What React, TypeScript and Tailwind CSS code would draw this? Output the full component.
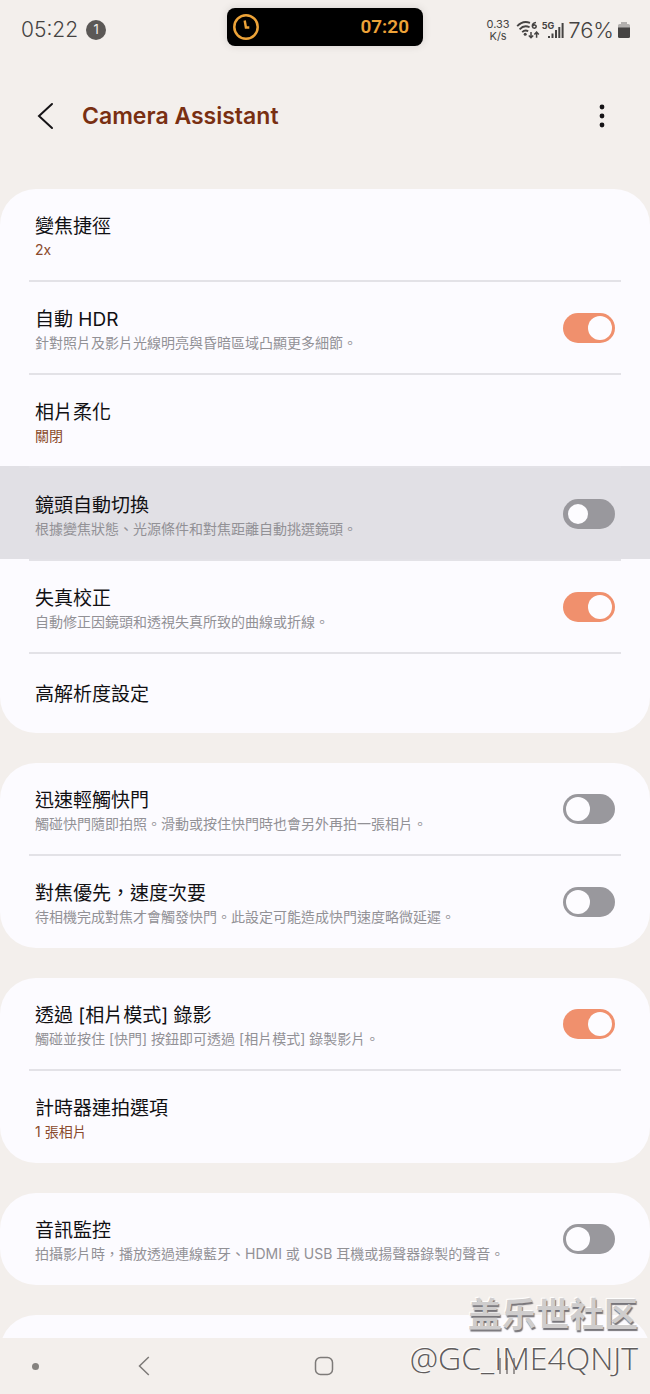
import { useState } from 'react';
import clsx from 'clsx';

interface Setting {
  id: string;
  title: string;
  description?: string;
  value?: string;
  toggle?: boolean;
  pressed?: boolean;
}

const groups: Setting[][] = [
  [
    { id: 'zoom', title: '變焦捷徑', value: '2x' },
    { id: 'hdr', title: '自動 HDR', description: '針對照片及影片光線明亮與昏暗區域凸顯更多細節。', toggle: true },
    { id: 'soften', title: '相片柔化', value: '關閉' },
    { id: 'lens', title: '鏡頭自動切換', description: '根據變焦狀態、光源條件和對焦距離自動挑選鏡頭。', toggle: false, pressed: true },
    { id: 'distortion', title: '失真校正', description: '自動修正因鏡頭和透視失真所致的曲線或折線。', toggle: true },
    { id: 'resolution', title: '高解析度設定' },
  ],
  [
    { id: 'quick-tap', title: '迅速輕觸快門', description: '觸碰快門隨即拍照。滑動或按住快門時也會另外再拍一張相片。', toggle: false },
    { id: 'focus', title: '對焦優先，速度次要', description: '待相機完成對焦才會觸發快門。此設定可能造成快門速度略微延遲。', toggle: false },
  ],
  [
    { id: 'record', title: '透過 [相片模式] 錄影', description: '觸碰並按住 [快門] 按鈕即可透過 [相片模式] 錄製影片。', toggle: true },
    { id: 'timer', title: '計時器連拍選項', value: '1 張相片' },
  ],
  [
    { id: 'audio', title: '音訊監控', description: '拍攝影片時，播放透過連線藍牙、HDMI 或 USB 耳機或揚聲器錄製的聲音。', toggle: false },
  ],
];

function SettingText({ item }: { item: Setting }) {
  const single = !item.description && !item.value;
  return (
    <span className={clsx('flex min-w-0 flex-1 flex-col', single ? 'pt-7 pb-6' : 'pt-[25px] pb-5')}>
      <span className="text-[19px] leading-[26px] text-[#111013]">{item.title}</span>
      {item.description && <span className="text-[14px] leading-5 text-[#929196]">{item.description}</span>}
      {item.value && <span className="text-[14px] leading-5 text-[#8a4a2c]">{item.value}</span>}
    </span>
  );
}

function SettingRow({ item, first }: { item: Setting; first: boolean }) {
  const [on, setOn] = useState(item.toggle ?? false);

  return (
    <li className={clsx(item.pressed && 'bg-[#e1e0e5]')}>
      {!first && <div className="mx-[29px] h-[2px] bg-[#e3e2e7]" />}
      {item.toggle === undefined ? (
        <button type="button" className="flex w-full px-[35px] text-left">
          <SettingText item={item} />
        </button>
      ) : (
        <label htmlFor={item.id} className="flex items-center gap-4 px-[35px]">
          <SettingText item={item} />
          <input
            id={item.id}
            type="checkbox"
            role="switch"
            checked={on}
            onChange={(e) => setOn(e.target.checked)}
            className={clsx(
              'flex h-[30px] w-[52px] shrink-0 appearance-none items-center rounded-full bg-[#99989d]',
              'before:block before:rounded-full before:bg-[#fdfcff] checked:justify-end checked:bg-[#f0906d]',
              item.pressed ? 'px-[5px] before:size-5' : 'px-[3px] before:size-6',
            )}
          />
        </label>
      )}
    </li>
  );
}

function StatusBar() {
  return (
    <div className="grid h-[58px] shrink-0 grid-cols-[1fr_auto_1fr] items-center pt-0.5 text-[#454342]">
      <div className="flex items-center gap-2 pl-[21px]">
        <span className="text-[21px] font-light">05:22</span>
        <span className="flex size-5 items-center justify-center rounded-full bg-[#5b5856] text-[13px] text-[#f3efec]">1</span>
      </div>

      <div className="mb-1.5 flex h-[38px] w-[196px] items-center justify-between rounded-lg bg-black pr-3.5 pl-1.5 text-[#eda338] shadow-[0_0_8px_rgba(0,0,0,0.12)]">
        <svg viewBox="0 0 26 26" className="size-[26px]" fill="none" stroke="currentColor">
          <circle cx="13" cy="13" r="11.7" strokeWidth="2.5" />
          <path d="M11.7 6.5l1.2 7h3.4" strokeWidth="2.4" />
        </svg>
        <span className="font-['Roboto',sans-serif] text-[19px] font-semibold">07:20</span>
      </div>

      <div className="flex items-center justify-end pr-5">
        <span className="mr-1.5 flex flex-col items-center text-[11px] leading-3">
          <span>0.33</span>
          <span>K/s</span>
        </span>
        <svg viewBox="0 0 24 20" className="mr-0.5 h-5 w-6" fill="none" stroke="currentColor" strokeWidth="1.8">
          <path d="M1.2 6.2C4.6 2.4 9.6 1.2 14 2.8M3.6 9.4c2.7-3 6.6-3.8 10-2.1M6.2 12.2c1.7-1.7 4.2-2 6-1" />
          <circle cx="9.2" cy="14.3" r="1.5" fill="currentColor" stroke="none" />
          <path d="M20 2.5c-2.6.3-3.9 2-3.6 4 .3 2.4 3.8 2.2 3.8.1 0-2-2.6-2.2-3.6-.6" strokeWidth="1.6" />
          <path d="M15 12v5.5M12.8 15.4l2.2 2.3 2.2-2.3M20.6 17.8v-5.5M18.4 14.4l2.2-2.3 2.2 2.3" strokeWidth="1.5" />
        </svg>
        <span className="flex items-start">
          <span className="-mr-1.5 text-[9px] leading-[10px] font-bold">5G</span>
          <svg viewBox="0 0 16 18" className="h-[18px] w-4" fill="currentColor">
            <path d="M0 15h2v2H0zM3.5 12.5h2V17h-2zM7 9h2v8H7zM10.3 6h2v11h-2zM13.6 2h2v15h-2z" />
          </svg>
        </span>
        <span className="ml-1 text-[22px] font-light">76%</span>
        <svg viewBox="0 0 12 18" className="ml-1 h-[18px] w-3">
          <path d="M3 1h6v2h1.5q1.5 0 1.5 1.500V8H0V4.500Q0 3 1.500 3H3z" fill="#b3b0ae" />
          <path d="M0 6.500h12v9q0 1.500-1.500 1.500h-9Q0 17 0 15.500z" fill="currentColor" />
        </svg>
      </div>
    </div>
  );
}

function NavBar() {
  return (
    <nav className="grid h-14 shrink-0 grid-cols-[70px_147px_1fr_152px] items-center text-[#7d7a78]">
      <button type="button" aria-label="Hide bar" className="flex justify-center">
        <span className="size-[7px] rounded-full bg-[#85827f]" />
      </button>
      <button type="button" aria-label="Back" className="flex justify-center">
        <svg viewBox="0 0 12 20" className="h-5 w-3" fill="none" stroke="currentColor" strokeWidth="1.5">
          <path d="M10.8 1L1.5 10l9.3 9" />
        </svg>
      </button>
      <button type="button" aria-label="Home" className="flex justify-start pl-[97px]">
        <svg viewBox="0 0 20 20" className="size-5" fill="none" stroke="currentColor" strokeWidth="1.5">
          <rect x="1.5" y="1.5" width="17" height="17" rx="5" />
        </svg>
      </button>
      <button type="button" aria-label="Recent apps" className="flex justify-start">
        <svg viewBox="0 0 18 18" className="size-[18px]" fill="none" stroke="currentColor" strokeWidth="1.5">
          <path d="M2 1v16M9 1v16M16 1v16" />
        </svg>
      </button>
    </nav>
  );
}

export default function App() {
  return (
    <div
      lang="zh-TW"
      className="relative flex h-screen flex-col overflow-hidden bg-[#f3efec] font-['Inter','Noto_Sans_CJK_TC',sans-serif]"
    >
      <StatusBar />

      <header className="flex h-[116px] shrink-0 items-center pr-[38px] pl-[35px]">
        <button type="button" aria-label="Back" className="flex w-[47px]">
          <svg viewBox="0 0 20 28" className="h-7 w-5" fill="none" stroke="#151316" strokeWidth="2" strokeLinecap="round">
            <path d="M17 2L4 14l13 12" />
          </svg>
        </button>
        <h1 className="flex-1 text-[23px] font-semibold text-[#792f12]">Camera Assistant</h1>
        <button type="button" aria-label="More options" className="flex w-5 justify-center">
          <svg viewBox="0 0 6 24" className="h-6 w-1.5" fill="#151316">
            <circle cx="3" cy="3" r="2.4" />
            <circle cx="3" cy="12" r="2.4" />
            <circle cx="3" cy="21" r="2.4" />
          </svg>
        </button>
      </header>

      <main className="flex min-h-0 flex-1 flex-col gap-[30px] overflow-y-auto pt-[15px] [scrollbar-width:none]">
        {groups.map((items) => (
          <ul key={items[0].id} className="shrink-0 overflow-hidden rounded-[36px] bg-[#fcfbff] pb-px">
            {items.map((item, i) => (
              <SettingRow key={item.id} item={item} first={i === 0} />
            ))}
          </ul>
        ))}
        <div className="h-[92px] shrink-0 rounded-[36px] bg-[#fcfbff]" />
      </main>

      <NavBar />

      <div className="pointer-events-none absolute right-3 bottom-3.5 flex flex-col items-end">
        <span
          lang="zh-CN"
          className="font-['Noto_Sans_CJK_SC',sans-serif] text-[34px] leading-[46px] font-bold text-[#cfcdcd] [text-shadow:1px_2px_1px_#77757a,-1px_-1px_1px_#ffffff]"
        >
          盖乐世社区
        </span>
        <span className="font-['Open_Sans',sans-serif] text-[32px] leading-[44px] font-light text-[#5f5c5c] [text-shadow:-1px_-1px_1px_#ffffff]">
          @GC_IME4QNJT
        </span>
      </div>
    </div>
  );
}
